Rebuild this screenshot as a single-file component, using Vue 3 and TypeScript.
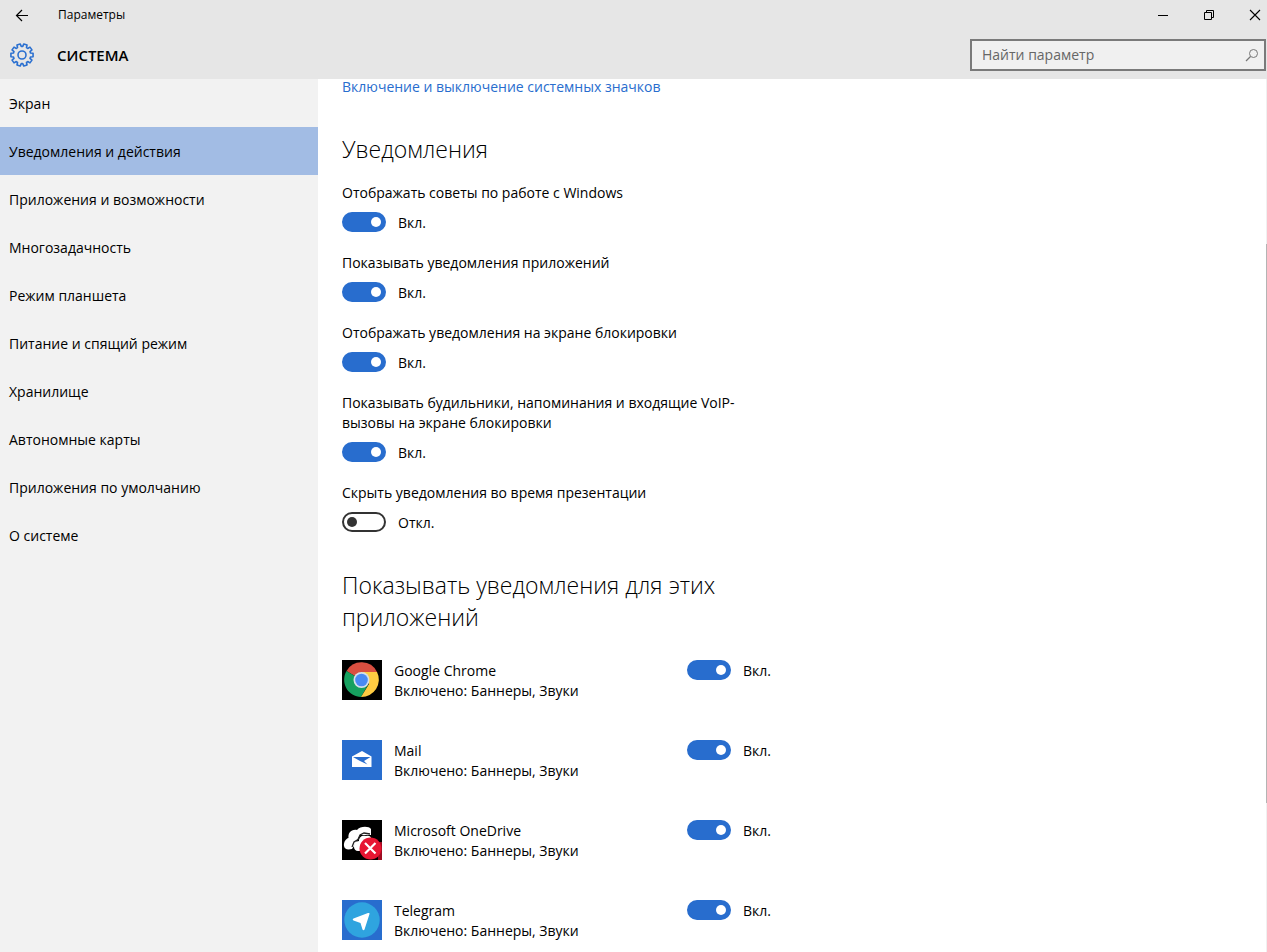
<script setup lang="ts">
import { ref } from 'vue'

interface Setting {
  id: string
  label: string
  on: boolean
}

interface AppEntry {
  id: 'chrome' | 'mail' | 'onedrive' | 'telegram'
  name: string
  on: boolean
}

const sections: string[] = [
  'Экран',
  'Уведомления и действия',
  'Приложения и возможности',
  'Многозадачность',
  'Режим планшета',
  'Питание и спящий режим',
  'Хранилище',
  'Автономные карты',
  'Приложения по умолчанию',
  'О системе',
]

const active = ref(1)
const query = ref('')

const settings = ref<Setting[]>([
  { id: 'tips', label: 'Отображать советы по работе с Windows', on: true },
  { id: 'apps', label: 'Показывать уведомления приложений', on: true },
  { id: 'lock', label: 'Отображать уведомления на экране блокировки', on: true },
  { id: 'voip', label: 'Показывать будильники, напоминания и входящие VoIP-вызовы на экране блокировки', on: true },
  { id: 'present', label: 'Скрыть уведомления во время презентации', on: false },
])

const apps = ref<AppEntry[]>([
  { id: 'chrome', name: 'Google Chrome', on: true },
  { id: 'mail', name: 'Mail', on: true },
  { id: 'onedrive', name: 'Microsoft OneDrive', on: true },
  { id: 'telegram', name: 'Telegram', on: true },
])

const stateText = (on: boolean): string => (on ? 'Вкл.' : 'Откл.')

// Outline of the ten-toothed gear, centred on (12.5, 12.5).
const gearPath = (() => {
  const teeth = 10
  const step = (Math.PI * 2) / teeth
  const profile: [number, number][] = [
    [-0.36, 8.7],
    [-0.24, 11.2],
    [0.24, 11.2],
    [0.36, 8.7],
  ]
  const points: string[] = []
  for (let i = 0; i < teeth; i++) {
    for (const [offset, radius] of profile) {
      const a = (i + 0.5 + offset) * step - Math.PI / 2
      points.push(`${(12.5 + radius * Math.cos(a)).toFixed(2)} ${(12.5 + radius * Math.sin(a)).toFixed(2)}`)
    }
  }
  return `M${points.join('L')}Z`
})()
</script>

<template>
  <div class="window">
    <header class="top">
      <div class="titlebar">
        <button class="back" type="button" aria-label="Назад">
          <svg width="14" height="14" viewBox="0 0 14 14" aria-hidden="true">
            <path d="M1.5 7.500H13M7 2L1.5 7.500L7 13" fill="none" stroke="#000" stroke-width="1.2" />
          </svg>
        </button>
        <span class="title">Параметры</span>
        <div class="controls">
          <button type="button" aria-label="Свернуть">
            <svg width="12" height="12" viewBox="0 0 12 12" aria-hidden="true">
              <path d="M1 6.5H11" stroke="#000" />
            </svg>
          </button>
          <button type="button" aria-label="Восстановить">
            <svg width="12" height="12" viewBox="0 0 12 12" aria-hidden="true">
              <path d="M1.5 3.5H8.500V10.500H1.500ZM3.500 3.500V1.500H10.500V8.500H8.500" fill="none" stroke="#000" />
            </svg>
          </button>
          <button type="button" aria-label="Закрыть">
            <svg width="12" height="12" viewBox="0 0 12 12" aria-hidden="true">
              <path d="M1 1L11 11M11 1L1 11" stroke="#000" stroke-width="1.1" />
            </svg>
          </button>
        </div>
      </div>
      <div class="heading">
        <svg class="gear" width="26" height="26" viewBox="-0.500 -0.500 26 26" aria-hidden="true">
          <path :d="gearPath" fill="none" stroke="#2b70d0" stroke-width="1.6" stroke-linejoin="round" />
          <circle cx="12.5" cy="12.5" r="4" fill="none" stroke="#2b70d0" stroke-width="1.6" />
        </svg>
        <h1>СИСТЕМА</h1>
        <label class="search">
          <input v-model="query" type="text" placeholder="Найти параметр" aria-label="Найти параметр" />
          <svg width="14" height="14" viewBox="0 0 14 14" aria-hidden="true">
            <circle cx="8.500" cy="5.500" r="4" fill="none" stroke="#777" />
            <path d="M5.500 8.500L1 13" stroke="#777" stroke-width="1.2" />
          </svg>
        </label>
      </div>
    </header>

    <div class="body">
      <nav class="sidebar">
        <a
          v-for="(name, i) in sections"
          :key="name"
          href="#"
          :class="{ active: i === active }"
          :aria-current="i === active ? 'page' : undefined"
          @click.prevent="active = i"
        >{{ name }}</a>
      </nav>

      <main class="content">
        <a class="link" href="#">Включение и выключение системных значков</a>

        <section class="group">
          <h2>Уведомления</h2>
          <div v-for="s in settings" :key="s.id" class="setting">
            <label class="caption" :for="s.id">{{ s.label }}</label>
            <div class="switch">
              <input :id="s.id" v-model="s.on" type="checkbox" role="switch" />
              <span>{{ stateText(s.on) }}</span>
            </div>
          </div>
        </section>

        <section class="group apps">
          <h2>Показывать уведомления для этих приложений</h2>
          <ul>
            <li v-for="app in apps" :key="app.id">
              <svg v-if="app.id === 'chrome'" class="icon" viewBox="0 0 40 40" aria-hidden="true">
                <filter id="soft-chrome"><feGaussianBlur stdDeviation="0.6" /></filter>
                <rect width="40" height="40" fill="#000" />
                <g filter="url(#soft-chrome)">
                  <path d="M19.500 20L4.500 11A17.300 17.300 0 0 1 35 12Z" fill="#d94f41" />
                  <path d="M4.500 11A17.300 17.300 0 0 0 19 37L26.500 24L19.500 20Z" fill="#17a05e" />
                  <path d="M20 12H35A17.300 17.300 0 0 1 19 37L27 24Z" fill="#fecb42" />
                  <circle cx="19.500" cy="20" r="8" fill="#d5e0ea" />
                  <circle cx="19.500" cy="20" r="6.300" fill="#4a8af4" />
                </g>
              </svg>
              <svg v-else-if="app.id === 'mail'" class="icon" viewBox="0 0 40 40" aria-hidden="true">
                <rect width="40" height="40" fill="#286dce" />
                <path d="M10 16.500L20 11L29.500 16.500V27H10Z" fill="#fff" />
                <path d="M11 17H28.500L22 21L25.500 24.500L18 21Z" fill="#286dce" />
              </svg>
              <svg v-else-if="app.id === 'onedrive'" class="icon" viewBox="0 0 40 40" aria-hidden="true">
                <filter id="soft-cloud"><feGaussianBlur stdDeviation="0.6" /></filter>
                <rect width="40" height="40" fill="#000" />
                <g filter="url(#soft-cloud)">
                  <path d="M2 26C1.500 22 4 18.500 6.500 18C6 13 9 9 15 10C18 6 27 6 29 9V15H18L12 26L10 29C5 30 2.500 29 2 26Z" fill="#fff" />
                  <path d="M12 27C12 23 14 21.500 17 21C17 17 20 15 24 16C27 15 29 16 30 20L22 31H16C13.500 31 12 29 12 27Z" fill="#fff" />
                  <path d="M10 27L12 22L16 19.500L18 15L22 13L28 14" fill="none" stroke="#222" stroke-width="1.300" />
                  <path d="M36 22H40V40H36Z" fill="#9e0b20" />
                  <circle cx="28.500" cy="28.500" r="11" fill="#e61230" />
                  <path d="M23 23L33.500 33.500M33.500 23L23 33.500" stroke="#fff" stroke-width="2.200" />
                </g>
              </svg>
              <svg v-else class="icon" viewBox="0 0 40 40" aria-hidden="true">
                <rect width="40" height="40" fill="#286dce" />
                <circle cx="20" cy="20" r="17.700" fill="#2fa4df" />
                <path d="M27.500 14L22.500 29.500C22 30.500 21 30.500 20.500 29.500L18.500 23L11.500 20.500C10.500 20 10.500 19 11.500 18.500L26 13C27 12.700 27.700 13 27.500 14Z" fill="#fff" />
              </svg>
              <label class="name" :for="app.id">
                <span>{{ app.name }}</span>
                <span>Включено: Баннеры, Звуки</span>
              </label>
              <div class="switch">
                <input :id="app.id" v-model="app.on" type="checkbox" role="switch" />
                <span>{{ stateText(app.on) }}</span>
              </div>
            </li>
          </ul>
        </section>
        <div class="scrollbar" aria-hidden="true"><div class="thumb"></div></div>
      </main>
    </div>
  </div>
</template>

<style>
body {
  margin: 0;
}
</style>

<style scoped>
.window {
  display: flex;
  flex-direction: column;
  min-height: 100vh;
  background: #fff;
  color: #000;
  font: 14px/20px "Open Sans", "Noto Sans", sans-serif;
}

.top {
  background: #e6e6e6;
}

.titlebar {
  display: flex;
  align-items: center;
  height: 30px;
}

button {
  display: flex;
  align-items: center;
  justify-content: center;
  height: 30px;
  padding: 0;
  border: 0;
  background: none;
}

.back {
  width: 44px;
}

.title {
  margin-left: 14px;
  font-size: 12px;
}

.controls {
  display: flex;
  margin-left: auto;
  margin-right: -11px;
  overflow: hidden;
}

.controls button {
  width: 46px;
}

.heading {
  display: flex;
  align-items: center;
  height: 49px;
  padding: 0 1px 0 9px;
}

.gear {
  flex: none;
}

h1 {
  margin: 0 0 0 22px;
  font-size: 15px;
  font-weight: 600;
  line-height: 20px;
}

.search {
  display: flex;
  align-items: center;
  box-sizing: border-box;
  width: 296px;
  height: 32px;
  margin-left: auto;
  padding: 0 5px 0 10px;
  border: 2px solid #7a7a7a;
  background: #f0f0f0;
}

.search input {
  flex: 1;
  min-width: 0;
  padding: 0;
  border: 0;
  outline: 0;
  background: none;
  font: inherit;
  color: #000;
}

.search input::placeholder {
  color: #666;
  opacity: 1;
}

.body {
  display: flex;
  flex: 1;
}

.sidebar {
  flex: none;
  width: 318px;
  background: #f2f2f2;
}

.sidebar a {
  display: block;
  padding: 15px 9px 13px;
  color: #000;
  text-decoration: none;
}

.sidebar a.active {
  background: #a2bce4;
}

.content {
  position: relative;
  flex: 1;
  min-width: 0;
  padding: 0 24px 11px;
}

.link {
  display: block;
  line-height: 16px;
  color: #286dce;
  text-decoration: none;
}

.group {
  max-width: 430px;
  margin-top: 38px;
}

h2 {
  max-width: 400px;
  margin: 0 0 18px;
  font-size: 23px;
  font-weight: 300;
  line-height: 32px;
}

.setting {
  max-width: 400px;
  margin-bottom: 21px;
}

.caption {
  display: block;
  margin-bottom: 9px;
}

.switch {
  display: flex;
  align-items: center;
  gap: 12px;
  height: 20px;
}

.switch span {
  padding-top: 2px;
}

.switch input {
  appearance: none;
  display: flex;
  align-items: center;
  box-sizing: border-box;
  width: 44px;
  height: 20px;
  margin: 0;
  padding: 0 3px;
  border: 2px solid #333;
  border-radius: 10px;
  background: #fff;
}

.switch input::before {
  content: "";
  width: 10px;
  height: 10px;
  border-radius: 50%;
  background: #333;
}

.switch input:checked {
  justify-content: flex-end;
  border-color: #286dce;
  background: #286dce;
}

.switch input:checked::before {
  background: #fff;
}

.apps {
  margin-top: 37px;
}

.apps h2 {
  margin-bottom: 27px;
}

ul {
  display: grid;
  gap: 39px;
  margin: 0;
  padding: 0;
  list-style: none;
}

li {
  display: grid;
  grid-template-columns: 40px 1fr 85px;
  column-gap: 12px;
}

.icon {
  width: 40px;
  height: 40px;
}

.name {
  padding-top: 1px;
}

.name span {
  display: block;
}

.scrollbar {
  position: absolute;
  top: 0;
  right: 0;
  bottom: 0;
  width: 1px;
  background: #f0f0f0;
}

.thumb {
  height: 64%;
  margin-top: 165px;
  background: #b4b4b4;
}
</style>
